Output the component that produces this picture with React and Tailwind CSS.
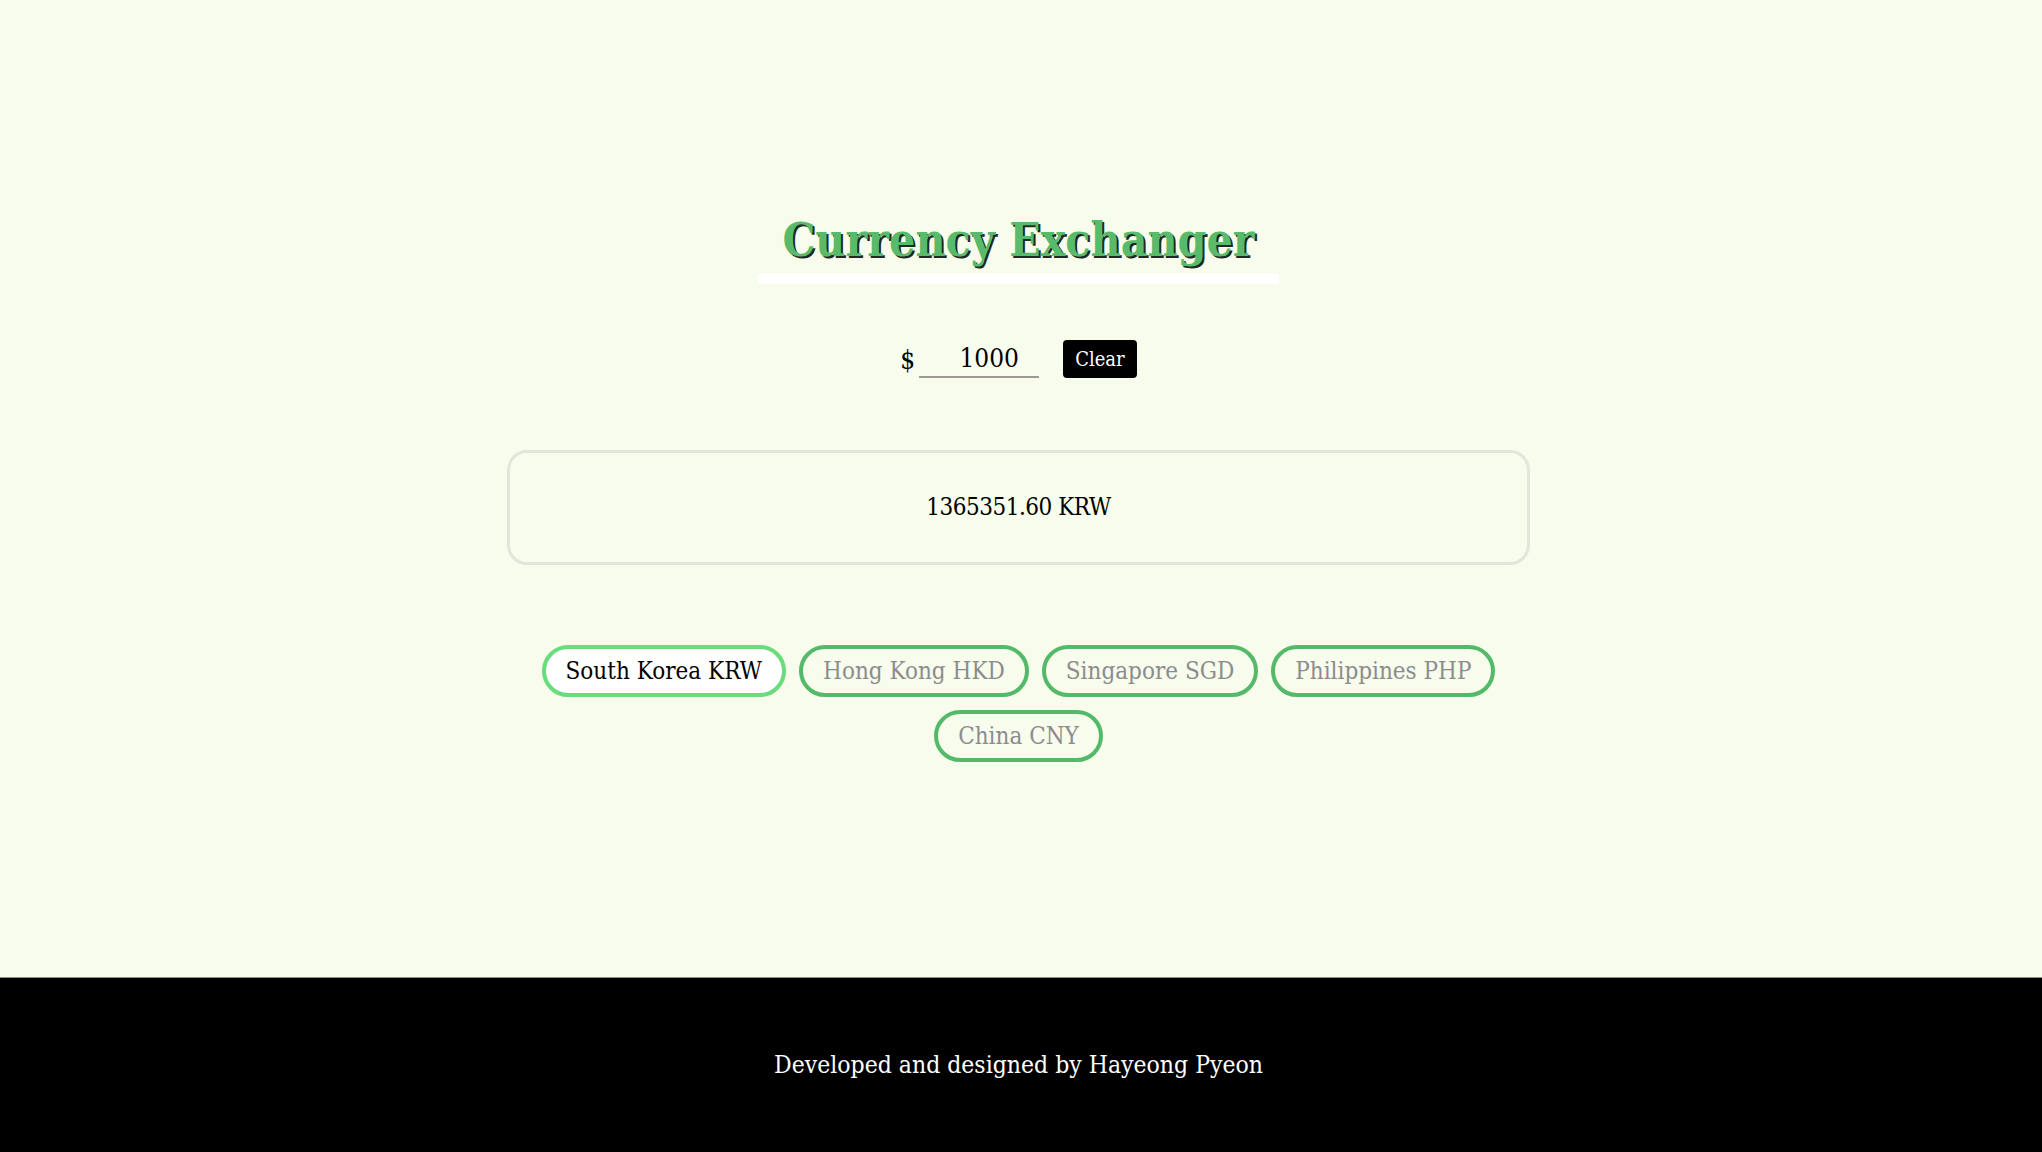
import React, { useState } from "react";

const rates = [
  { label: "South Korea KRW", code: "KRW", rate: 1365.3516 },
  { label: "Hong Kong HKD", code: "HKD", rate: 7.8123 },
  { label: "Singapore SGD", code: "SGD", rate: 1.3452 },
  { label: "Philippines PHP", code: "PHP", rate: 56.12 },
  { label: "China CNY", code: "CNY", rate: 7.2381 },
];

const slab = "font-['DejaVu_Serif_Condensed','DejaVu_Serif',serif]";

const App = () => {
  const [amount, setAmount] = useState("1000");
  const [active, setActive] = useState("KRW");
  const cur = rates.find((r) => r.code === active);
  const value = (Number(amount || 0) * cur.rate).toFixed(2);

  return (
    <div className={`h-screen flex flex-col bg-[#f7fcec] ${slab}`}>
      <main className="flex-1 flex flex-col items-center justify-center pr-[5px]">
        <h1 className="px-6 pb-[10px] border-b-[10px] border-white text-[46px] leading-[48px] font-bold text-[#58bb6c] [text-shadow:2px_2px_0_#1f2a20]">
          Currency Exchanger
        </h1>

        <div className="mt-[56px] flex items-end gap-6">
          <div className="flex items-end gap-1">
            <span className="text-[26px] leading-[36px] text-black">$</span>
            <input
              value={amount}
              onChange={(e) => setAmount(e.target.value)}
              className="w-[120px] h-[36px] pl-5 bg-transparent border-b-2 border-[#9a9a92] text-center text-[26px] text-black outline-none"
            />
          </div>
          <button
            onClick={() => setAmount("")}
            className="h-[38px] px-3 rounded-[4px] bg-black text-white text-[20px] leading-none"
          >
            Clear
          </button>
        </div>

        <div className="mt-[72px] w-[1023px] h-[115px] rounded-[20px] border-[3px] border-[#e1e6d9] flex items-center justify-center text-[24px] tracking-[-0.5px] text-black">
          {value} {cur.code}
        </div>

        <div className="mt-[80px] w-[1023px] flex flex-wrap justify-center gap-[13px]">
          {rates.map((r) => (
            <button
              key={r.code}
              onClick={() => setActive(r.code)}
              className={
                r.code === active
                  ? "h-[52px] px-5 rounded-full border-4 border-[#69dc7c] bg-white text-black text-[24px]"
                  : "h-[52px] px-5 rounded-full border-4 border-[#55b96a] bg-transparent text-[#8c8c8c] text-[24px]"
              }
            >
              {r.label}
            </button>
          ))}
        </div>
      </main>

      <footer className="h-[175px] shrink-0 bg-black border-t border-[#8d917f] flex items-center justify-center pr-[5px]">
        <p className="text-[24.5px] text-white">Developed and designed by Hayeong Pyeon</p>
      </footer>
    </div>
  );
};

export default App;
